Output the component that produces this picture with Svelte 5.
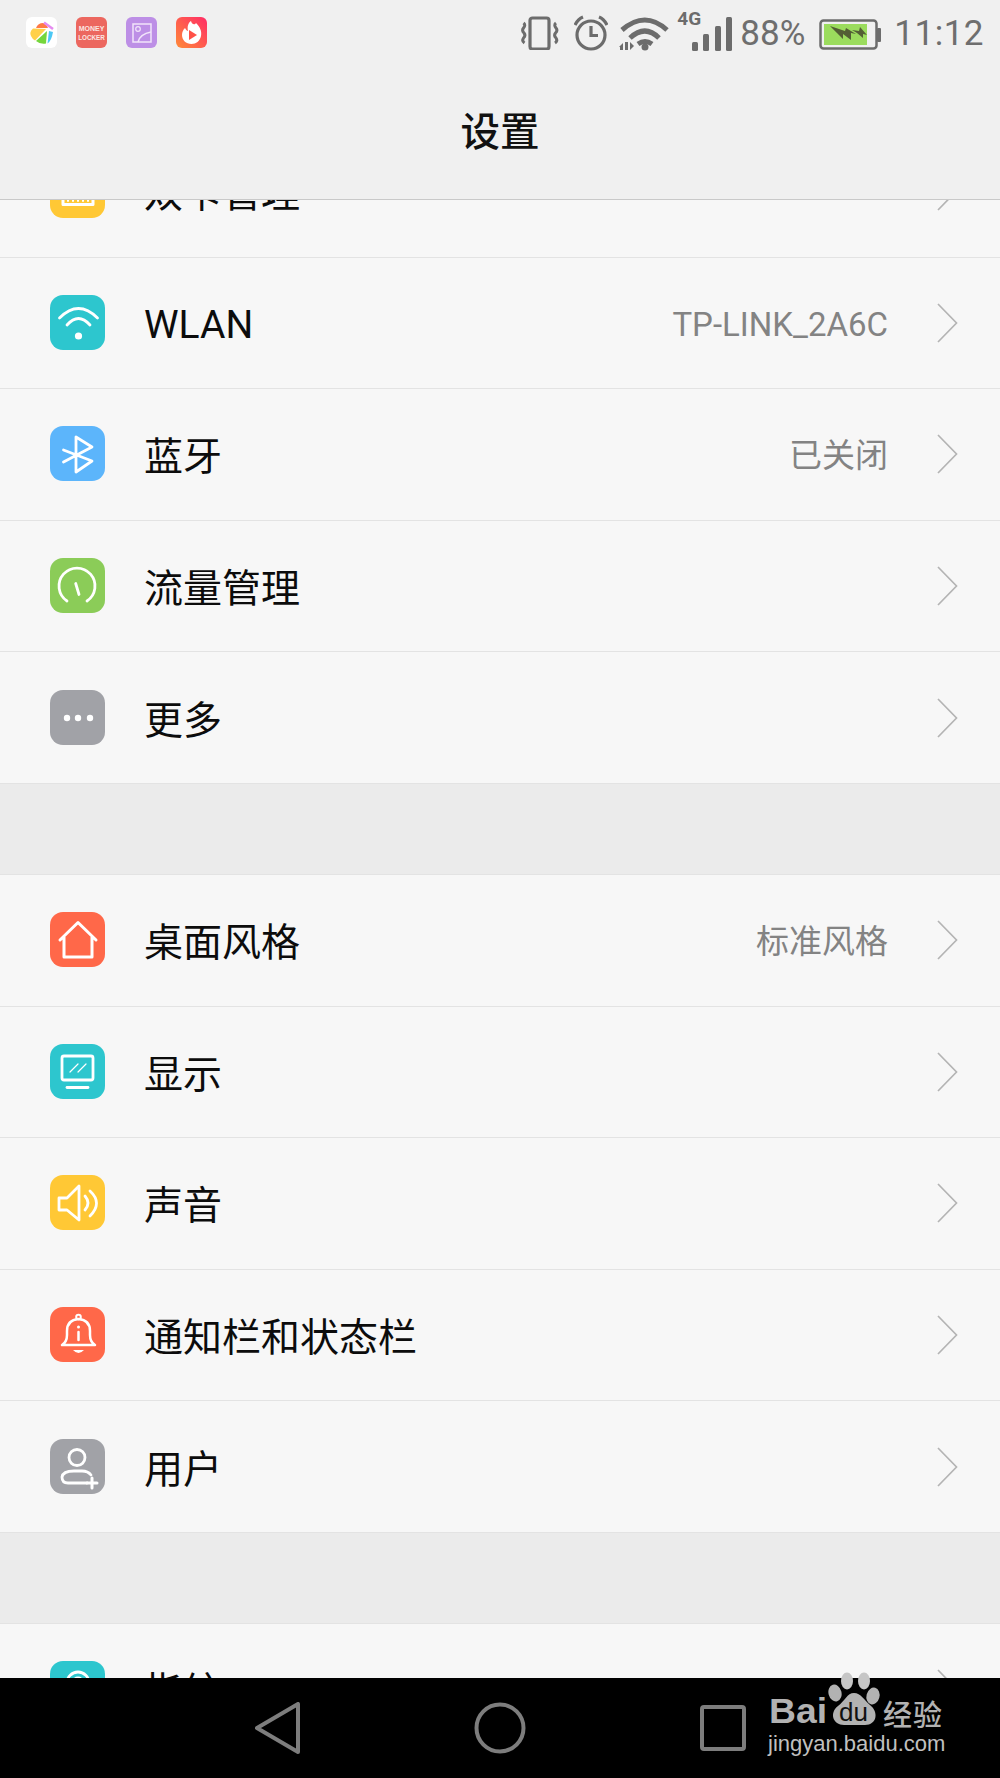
<script>
  const groups = [
    { cls: 'first', rows: [
      { icon: 'sim', bg: '#ffc835', label: '双卡管理' },
      { icon: 'wifi', bg: '#2dc6ce', label: 'WLAN', value: 'TP-LINK_2A6C', latin: true },
      { icon: 'bt', bg: '#5cb5fb', label: '蓝牙', value: '已关闭' },
      { icon: 'gauge', bg: '#8bcc58', label: '流量管理' },
      { icon: 'more', bg: '#a1a2a7', label: '更多' }
    ]},
    { cls: '', rows: [
      { icon: 'home', bg: '#ff6849', label: '桌面风格', value: '标准风格' },
      { icon: 'display', bg: '#2dc6ce', label: '显示' },
      { icon: 'sound', bg: '#ffc835', label: '声音' },
      { icon: 'bell', bg: '#ff6849', label: '通知栏和状态栏' },
      { icon: 'user', bg: '#a1a2a7', label: '用户' }
    ]},
    { cls: '', rows: [
      { icon: 'finger', bg: '#2dc6ce', label: '指纹' }
    ]}
  ];
</script>

<div class="page">
  <header class="top">
    <div class="status">
      <div class="apps">
        <svg class="app" viewBox="0 0 31 31">
          <rect width="31" height="31" rx="6" fill="#fff"/>
          <path d="M22 11 L10 11 Q12 6 17 6 Q20 6 22 11 Z" fill="#ff7a45"/>
          <path d="M20 12 L7 11.500 Q3 15 5 19 Q7 23 9 23.500 Z" fill="#ffd04a"/>
          <path d="M21 14 L10 24 Q14 27.500 20 26.500 Z" fill="#75d63c"/>
          <path d="M23 14 L21.500 26.500 Q25.500 24 27 15 Z" fill="#4dc8f5"/>
          <path d="M18 5.500 L27 12" stroke="#e58bf0" stroke-width="2.500"/>
        </svg>
        <div class="app money"><span>MONEY</span><span class="locker">LOCKER</span></div>
        <svg class="app" viewBox="0 0 31 31">
          <rect width="31" height="31" rx="6" fill="#bd8fe6"/>
          <rect x="7" y="7" width="18" height="18" fill="none" stroke="#f1e4fa" stroke-width="1.500"/>
          <circle cx="12" cy="12" r="2.300" fill="none" stroke="#f1e4fa" stroke-width="1.200"/>
          <path d="M12 25 Q14 17 25 15" fill="none" stroke="#f1e4fa" stroke-width="1.500"/>
        </svg>
        <svg class="app" viewBox="0 0 31 31">
          <defs><linearGradient id="fl" x1="0" y1="1" x2="1" y2="0"><stop offset="0" stop-color="#ff8a38"/><stop offset="1" stop-color="#ff2c66"/></linearGradient></defs>
          <rect width="31" height="31" rx="6" fill="url(#fl)"/>
          <path d="M15 4 C16 8 19 8 20 6 C24 10 26 14 25 19 C24 24 20 27 15.500 27 C10 27 6 23 6 18 C6 15 7 13 9 11 C10 13 11 14 12 14 C11 10 12 6 15 4 Z" fill="#fff"/>
          <path d="M13 13 L21 18 L13 23 Z" fill="#ff5148"/>
        </svg>
      </div>
      <div class="sys">
        <svg class="s-vib" viewBox="0 0 38 34" fill="none" stroke="#6c6c6c">
          <rect x="9" y="2" width="19" height="31" rx="2.500" stroke-width="3.200"/>
          <path d="M2.500 7 Q5 9 2.500 12 Q0.500 14.500 3 17 Q5 19.500 2.500 22 Q0.500 25 3.500 27" stroke-width="3"/>
          <path d="M35 7 Q32.500 9 35 12 Q37 14.500 34.500 17 Q32.500 19.500 35 22 Q37 25 34 27" stroke-width="3"/>
        </svg>
        <svg class="s-alarm" viewBox="0 0 34 36" fill="none" stroke="#6c6c6c" stroke-width="3.200">
          <circle cx="17" cy="20" r="14"/>
          <path d="M17 11 V20.500 H24"/>
          <path d="M1 10 Q4 4 9 2 M33 10 Q30 4 25 2"/>
        </svg>
        <svg class="s-wifi" viewBox="0 0 52 36">
          <g fill="none" stroke="#6c6c6c" stroke-width="5">
            <path d="M4 14 Q27 -6 49 14"/>
            <path d="M12 22 Q27 8 41 22"/>
            <path d="M20 28 Q27 23 34 28"/>
          </g>
          <circle cx="27" cy="31" r="3.500" fill="#6c6c6c"/>
          <path d="M1 31 L5 27 V34 H2 V31 Z M7 26 H10 V34 H7 Z M12 26 L16 30 L12 34 Z" fill="#6c6c6c"/>
        </svg>
        <div class="sig">
          <span class="fourg">4G</span>
          <svg viewBox="0 0 42 34" fill="#6c6c6c">
            <rect x="1" y="25" width="6" height="9" rx="1.500"/>
            <rect x="12" y="17" width="6" height="17" rx="1.500"/>
            <rect x="24" y="9" width="6" height="25" rx="1.500"/>
            <rect x="35" y="0" width="6" height="34" rx="1.500"/>
          </svg>
        </div>
        <span class="pct">88%</span>
        <svg class="s-bat" viewBox="0 0 62 31">
          <rect x="1.500" y="1.500" width="56" height="28" rx="3" fill="none" stroke="#6c6c6c" stroke-width="2.500"/>
          <rect x="58" y="9" width="4" height="14" rx="1" fill="#6c6c6c"/>
          <rect x="5" y="5" width="43" height="21" fill="#9bdc5d"/>
          <path d="M11 7 L26 12 L27 9 L37 15 L32 14 L32 21 L24 15 L24 20 Z" fill="#535f35"/>
          <path d="M33 11 L40 12 L41 8 L48 16 L44 15 L44 19 L38 14 Z" fill="#535f35"/>
        </svg>
        <span class="time">11:12</span>
      </div>
    </div>
    <h1>设置</h1>
  </header>

  <main class="scroller">
    <div class="list">
      {#each groups as group}
        <section class={'group ' + group.cls}>
          {#each group.rows as row}
            <div class="row">
              <span class="tile" style:background={row.bg}>
                <svg viewBox="0 0 55 55" fill="none" stroke="#fff" stroke-width="2.800" stroke-linecap="round" stroke-linejoin="round">
                  {#if row.icon === 'sim'}
                    <rect x="13" y="20" width="30" height="21.500" stroke-width="3"/>
                    <path d="M18 32 V38 M23 32 V38 M28 32 V38 M33 32 V38 M38 32 V38 M13 32 H43" stroke-width="2"/>
                  {:else if row.icon === 'wifi'}
                    <path d="M9.500 23 Q28.500 4 47.500 23"/>
                    <path d="M17 30 Q28.500 17 40 30"/>
                    <circle cx="28.500" cy="41" r="3.600" fill="#fff" stroke="none"/>
                  {:else if row.icon === 'bt'}
                    <path d="M13.500 36 L42 21 L26 11 V46 L42 35 L13.500 24"/>
                  {:else if row.icon === 'gauge'}
                    <path d="M17 43 A18 18 0 1 1 37 43"/>
                    <path d="M25.700 25.500 L29 36.500"/>
                  {:else if row.icon === 'more'}
                    <circle cx="17" cy="28" r="3.200" fill="#fff" stroke="none"/>
                    <circle cx="28" cy="28" r="3.200" fill="#fff" stroke="none"/>
                    <circle cx="40" cy="28" r="3.200" fill="#fff" stroke="none"/>
                  {:else if row.icon === 'home'}
                    <path d="M10 28 L28 10.500 L46 28 M14 25 V45 H42 V25" stroke-width="3"/>
                  {:else if row.icon === 'display'}
                    <rect x="12" y="12" width="31" height="24" rx="2"/>
                    <path d="M17 43.500 H38"/>
                    <path d="M20 28 L28 20 M28 28 L36 20" stroke-width="1.200"/>
                  {:else if row.icon === 'sound'}
                    <path d="M9 23 H17 L29 11 V45 L17 35 H9 Z"/>
                    <path d="M35 21 Q41 28 35 35"/>
                    <path d="M40 16 Q53 28 40 41"/>
                  {:else if row.icon === 'bell'}
                    <path d="M12 38 H45 Q40 35 40 28 V24 Q40 13 28.500 12 Q17 13 17 24 V28 Q17 35 12 38 Z" stroke-width="2.500"/>
                    <circle cx="28.500" cy="10" r="2.300" stroke-width="2"/>
                    <path d="M28.500 25 V33" stroke-width="2.500"/>
                    <circle cx="28.500" cy="20" r="1.500" fill="#fff" stroke="none"/>
                    <path d="M23 43 H34 Q28.500 49 23 43 Z" fill="#fff" stroke="none"/>
                  {:else if row.icon === 'user'}
                    <circle cx="27" cy="18.500" r="8"/>
                    <path d="M37 44 H18 Q12 44 12 38 Q13 32 24 32 H32 Q38 32 41 36"/>
                    <path d="M37 44 H47 M42 39 V49" stroke-width="3"/>
                  {:else if row.icon === 'finger'}
                    <circle cx="28" cy="22" r="11"/>
                    <circle cx="28" cy="22" r="5"/>
                  {/if}
                </svg>
              </span>
              <span class="label" class:latin={row.latin}>{row.label}</span>
              {#if row.value}<span class="value" class:latin={row.latin}>{row.value}</span>{/if}
              <svg class="chev" viewBox="0 0 21 40" fill="none" stroke="#b4b4b4" stroke-width="1.700"><path d="M1 1 L19.500 20 L1 39"/></svg>
            </div>
          {/each}
        </section>
      {/each}
    </div>
  </main>

  <nav class="nav">
    <svg class="n-back" viewBox="0 0 46 52" fill="none" stroke="#7d7d7d" stroke-width="4" stroke-linejoin="round"><path d="M43 2 V50 L2 26 Z"/></svg>
    <svg class="n-home" viewBox="0 0 52 52" fill="none" stroke="#7d7d7d" stroke-width="4"><circle cx="26" cy="26" r="23.500"/></svg>
    <svg class="n-rec" viewBox="0 0 46 46" fill="none" stroke="#7d7d7d" stroke-width="4" stroke-linejoin="round"><rect x="2" y="2" width="42" height="42" rx="2"/></svg>
  </nav>

  <aside class="mark">
    <svg class="paw" viewBox="0 0 54 58">
      <ellipse cx="19" cy="9" rx="6" ry="8.500" fill="#c6c6c6"/>
      <ellipse cx="36" cy="9" rx="6" ry="8.500" fill="#c6c6c6"/>
      <ellipse cx="7" cy="21" rx="6.500" ry="8.500" fill="#b2b2b2" transform="rotate(-15 7 21)"/>
      <ellipse cx="45" cy="24" rx="6.500" ry="8.500" fill="#b2b2b2" transform="rotate(15 45 24)"/>
      <path d="M26 21 C33 21 36 28 42 33 C51 40 49 53 37 53 H16 C5 53 1 41 10 34 C17 29 19 21 26 21 Z" fill="#b2b2b2"/>
    </svg>
    <span class="du">du</span>
    <span class="bai">Bai</span>
    <span class="jy">经验</span>
    <span class="url">jingyan.baidu.com</span>
  </aside>
</div>

<style>
  :global(body) {
    margin: 0;
    background: #f7f7f7;
  }
  .page {
    position: relative;
    width: 1000px;
    height: 1778px;
    display: flex;
    flex-direction: column;
    overflow: hidden;
    font-family: Roboto, "Noto Sans CJK SC", sans-serif;
  }
  .top {
    position: relative;
    z-index: 2;
    height: 199px;
    flex: none;
    background: #f0f0f0;
    border-bottom: 1px solid #c9c9c9;
  }
  .status {
    height: 64px;
    display: flex;
    justify-content: space-between;
    align-items: flex-start;
    padding-left: 26px;
  }
  .apps {
    display: flex;
    gap: 19px;
    padding-top: 17px;
  }
  .app {
    width: 31px;
    height: 31px;
    display: block;
  }
  .money {
    background: #ec675f;
    border-radius: 6px;
    color: #fbe6e2;
    font-size: 7px;
    line-height: 9px;
    font-weight: 700;
    display: flex;
    flex-direction: column;
    align-items: center;
    justify-content: center;
    font-family: "Liberation Sans", sans-serif;
  }
  .locker {
    font-size: 6.300px;
  }
  .sys {
    position: relative;
    display: flex;
    align-items: flex-start;
    height: 64px;
    padding-right: 16px;
  }
  .sys svg {
    display: block;
  }
  .s-vib {
    width: 38px;
    height: 34px;
    margin-top: 16px;
  }
  .s-alarm {
    width: 34px;
    height: 36px;
    margin: 15px 0 0 15px;
  }
  .s-wifi {
    width: 52px;
    height: 36px;
    margin: 16px 0 0 10px;
  }
  .sig {
    position: relative;
    width: 42px;
    height: 34px;
    margin: 17px 0 0 21px;
  }
  .sig svg {
    width: 42px;
    height: 34px;
  }
  .fourg {
    position: absolute;
    left: -14px;
    top: -8px;
    font-size: 19px;
    line-height: 20px;
    font-weight: 700;
    color: #6c6c6c;
  }
  .pct, .time {
    color: #6e6e6e;
    font-size: 35px;
    line-height: 40px;
    margin-top: 14px;
  }
  .pct {
    margin-left: 7px;
  }
  .s-bat {
    width: 62px;
    height: 31px;
    margin: 19px 0 0 14px;
  }
  .time {
    margin-left: 13px;
    letter-spacing: 0.500px;
  }
  h1 {
    margin: 0;
    text-align: center;
    font-size: 39.500px;
    line-height: 50px;
    font-weight: 500;
    color: #111;
    padding-top: 44px;
  }
  .scroller {
    flex: 1;
    min-height: 0;
    overflow: hidden;
    background: #ebebeb;
  }
  .list {
    margin-top: -75px;
    display: flex;
    flex-direction: column;
    gap: 90px;
  }
  .group {
    background: #f7f7f7;
    border-top: 1px solid #e3e3e3;
    border-bottom: 1px solid #e3e3e3;
  }
  .row {
    height: 130.600px;
    display: flex;
    align-items: center;
    padding: 0 42px 0 50px;
    border-bottom: 1px solid #e3e3e3;
  }
  .row:last-child {
    border-bottom: 0;
  }
  .tile {
    width: 55px;
    height: 55px;
    flex: none;
    border-radius: 13px;
    margin-bottom: 1px;
  }
  .tile svg {
    display: block;
    width: 55px;
    height: 55px;
  }
  .label {
    margin-left: 39px;
    flex: 1;
    font-size: 39px;
    color: #0c0c0c;
    white-space: nowrap;
    padding-bottom: 2px;
  }
  .value {
    font-size: 33px;
    color: #838383;
    margin-right: 49px;
    white-space: nowrap;
    padding-bottom: 2px;
  }
  .latin {
    padding-top: 4px;
    padding-bottom: 0;
  }
  .chev {
    flex: none;
    width: 21px;
    height: 40px;
  }
  .nav {
    position: relative;
    z-index: 2;
    flex: none;
    height: 100px;
    background: #000;
    display: flex;
    align-items: center;
    padding-left: 255px;
  }
  .nav svg {
    display: block;
  }
  .n-back {
    width: 46px;
    height: 52px;
  }
  .n-home {
    width: 52px;
    height: 52px;
    margin-left: 173px;
  }
  .n-rec {
    width: 46px;
    height: 46px;
    margin-left: 174px;
  }
  .mark {
    position: absolute;
    z-index: 3;
    left: 766px;
    top: 1672px;
    width: 190px;
    height: 90px;
    color: #b2b2b2;
  }
  .paw {
    position: absolute;
    left: 62px;
    top: 0;
    width: 54px;
    height: 58px;
  }
  .du {
    position: absolute;
    left: 73px;
    top: 25px;
    font: 400 26px/30px "Liberation Sans", sans-serif;
    color: #111;
  }
  .bai {
    position: absolute;
    left: 3px;
    top: 19px;
    font: 700 35px/40px "Liberation Sans", sans-serif;
    transform: scaleX(1.065);
    transform-origin: left center;
  }
  .jy {
    position: absolute;
    left: 117px;
    top: 24px;
    font: 500 29px/34px "Noto Sans CJK SC", sans-serif;
    letter-spacing: 1px;
  }
  .url {
    position: absolute;
    left: 2px;
    top: 59px;
    font: 400 22px/26px "Liberation Sans", sans-serif;
    color: #c0c0c0;
    white-space: nowrap;
  }
</style>
